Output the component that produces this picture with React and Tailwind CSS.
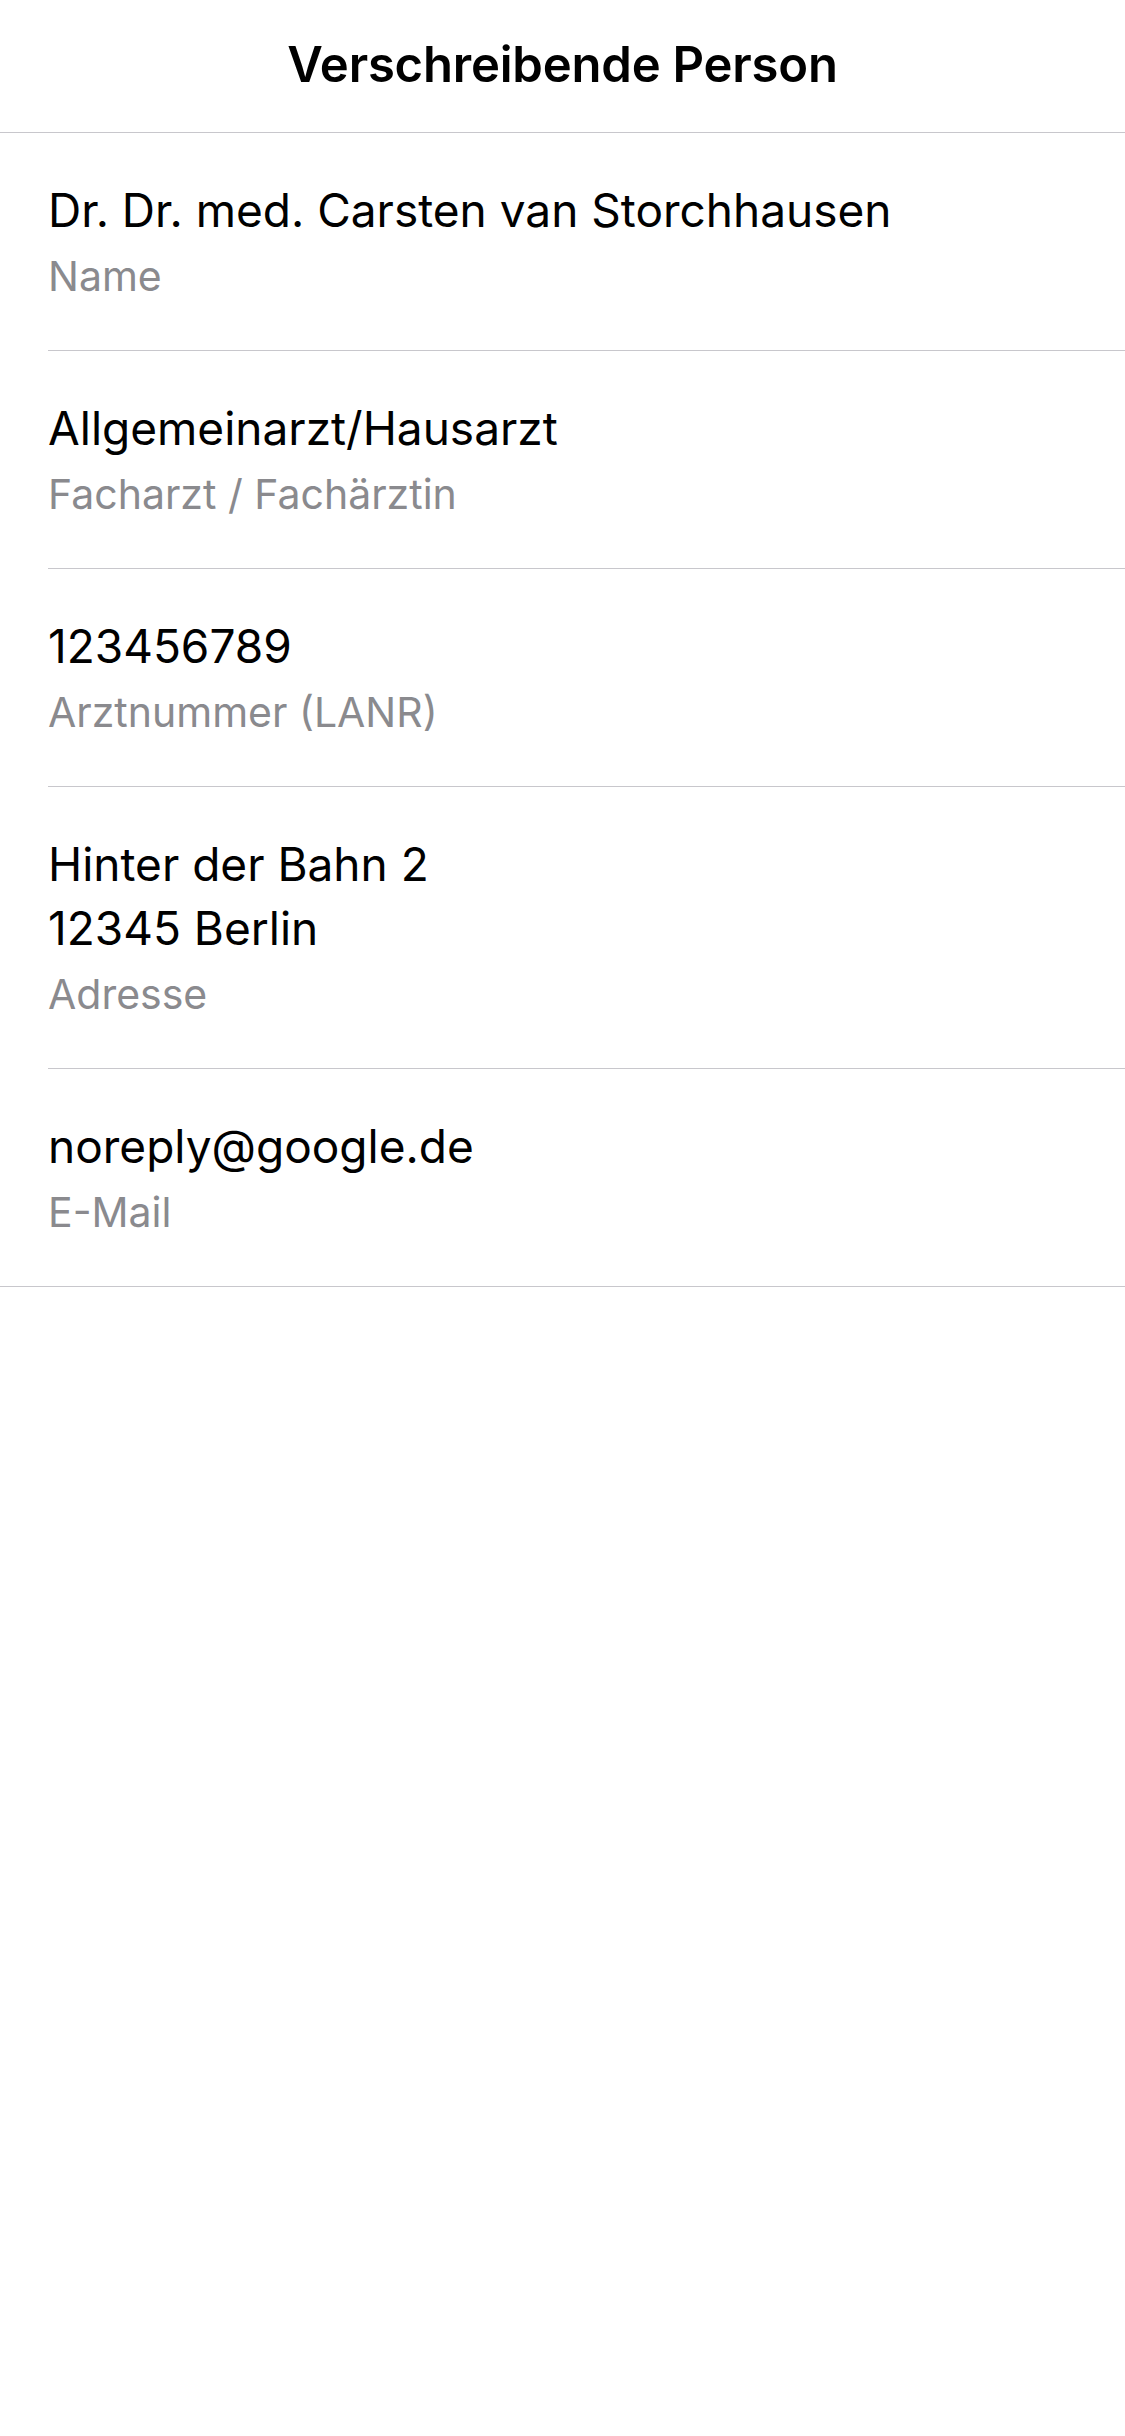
import React from "react";

const rows = [
  { value: ["Dr. Dr. med. Carsten van Storchhausen"], label: "Name" },
  { value: ["Allgemeinarzt/Hausarzt"], label: "Facharzt / Fachärztin" },
  { value: ["123456789"], label: "Arztnummer (LANR)" },
  { value: ["Hinter der Bahn 2", "12345 Berlin"], label: "Adresse" },
  { value: ["noreply@google.de"], label: "E-Mail" },
];

export default function App() {
  return (
    <div
      className="w-[1125px] min-h-[2436px] bg-white text-black"
      style={{ fontFamily: "Inter, 'Noto Sans', sans-serif" }}
    >
      <header className="h-[133px] border-b border-[#c8c7cc] flex items-start justify-center">
        <h1 className="mt-[35px] text-[49px] leading-[60px] font-semibold tracking-[-0.2px]">
          Verschreibende Person
        </h1>
      </header>
      <div className="border-b border-[#c8c7cc]">
        {rows.map((r, i) => (
          <div key={i} className="pl-[48px]">
            <div
              className={
                "pt-[45px] pb-[48px] " +
                (i < rows.length - 1 ? "border-b border-[#c8c7cc]" : "")
              }
            >
              {r.value.map((v, j) => (
                <div key={j} className="text-[46px] leading-[64px]">
                  {v}
                </div>
              ))}
              <div className="mt-[8px] text-[41px] leading-[52px] text-[#8a8a8e]">
                {r.label}
              </div>
            </div>
          </div>
        ))}
      </div>
    </div>
  );
}
